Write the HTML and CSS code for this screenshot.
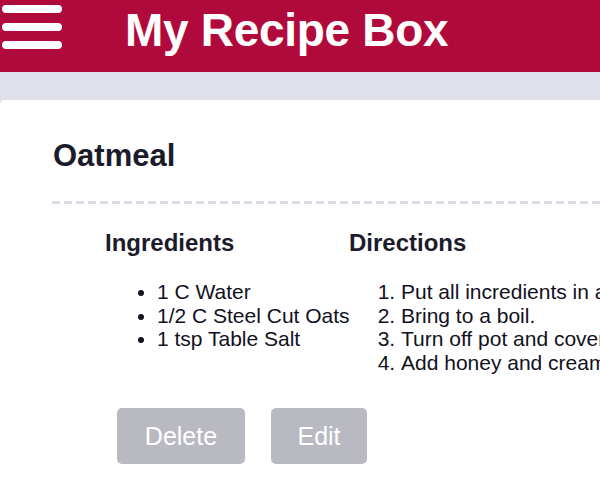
FILE: index.html
```html
<!DOCTYPE html>
<html lang="en">
<head>
<meta charset="utf-8">
<title>My Recipe Box</title>
<link rel="stylesheet" href="styles.css">
</head>
<body>
<header class="topbar">
  <div class="menu" aria-label="Menu">
    <span class="bar"></span>
    <span class="bar"></span>
    <span class="bar"></span>
  </div>
  <h1 class="title">My Recipe Box</h1>
</header>
<main class="stage">
  <section class="card">
    <h2 class="recipe-name">Oatmeal</h2>
    <div class="divider"></div>
    <div class="recipe-body">
      <div class="columns">
        <div class="col col-ingredients">
          <h3 class="col-title">Ingredients</h3>
          <ul class="list">
            <li>1 C Water</li>
            <li>1/2 C Steel Cut Oats</li>
            <li>1 tsp Table Salt</li>
          </ul>
        </div>
        <div class="col col-directions">
          <h3 class="col-title">Directions</h3>
          <ol class="list">
            <li>Put all incredients in a pot.</li>
            <li>Bring to a boil.</li>
            <li>Turn off pot and cover for 10 minutes.</li>
            <li>Add honey and cream to taste.</li>
          </ol>
        </div>
      </div>
      <div class="actions">
        <button class="btn btn-delete">Delete</button>
        <button class="btn btn-edit">Edit</button>
      </div>
    </div>
  </section>
</main>
</body>
</html>
```

FILE: styles.css
```css
html, body {
  margin: 0;
  padding: 0;
}
body {
  background: #e0e0ea;
  font-family: "Liberation Sans", Arial, Helvetica, sans-serif;
  color: #1b1b2b;
  overflow: hidden;
  width: 600px;
  height: 488px;
}
.topbar {
  height: 72px;
  background: #b00a3c;
  display: flex;
  align-items: flex-start;
}
.menu {
  display: flex;
  flex-direction: column;
  gap: 10px;
  padding: 5px 0 0 2px;
  width: 60px;
}
.bar {
  display: block;
  height: 8px;
  width: 60px;
  background: #ffffff;
  border-radius: 4px;
}
.title {
  margin: 0 0 0 63px;
  font-size: 46px;
  font-weight: bold;
  color: #ffffff;
  line-height: 60px;
  letter-spacing: -0.3px;
  text-shadow: 0 0 1px #d0103a;
}
.stage {
  padding-top: 28px;
}
.card {
  background: #ffffff;
  border-radius: 5px 0 0 0;
  width: 700px;
  height: 400px;
  padding: 37px 0 0 53px;
  box-sizing: border-box;
}
.recipe-name {
  margin: 0;
  font-size: 31px;
  line-height: 38px;
  font-weight: bold;
  color: #1b1b2b;
}
.divider {
  margin: 26px 0 0 -1px;
  height: 3px;
  background: repeating-linear-gradient(90deg, #dcdce6 0 8px, transparent 8px 12px);
}
.recipe-body {
  padding-left: 52px;
}
.columns {
  display: flex;
  margin-top: 25px;
}
.col-ingredients {
  width: 244px;
}
.col-title {
  margin: 0;
  font-size: 24px;
  line-height: 28px;
  font-weight: bold;
  color: #1b1b2b;
}
.list {
  margin: 23px 0 0 0;
  padding-left: 52px;
  font-size: 21px;
  line-height: 23.5px;
  color: #111122;
  white-space: nowrap;
}
.actions {
  display: flex;
  gap: 26px;
  margin: 34px 0 0 12px;
}
.btn {
  font-family: "Liberation Sans", Arial, Helvetica, sans-serif;
  font-size: 25px;
  color: #ffffff;
  background: #b9b9c1;
  border: none;
  border-radius: 5px;
  height: 56px;
  padding: 0;
  line-height: 56px;
  text-align: center;
}
.btn-delete {
  width: 128px;
}
.btn-edit {
  width: 96px;
}
```
